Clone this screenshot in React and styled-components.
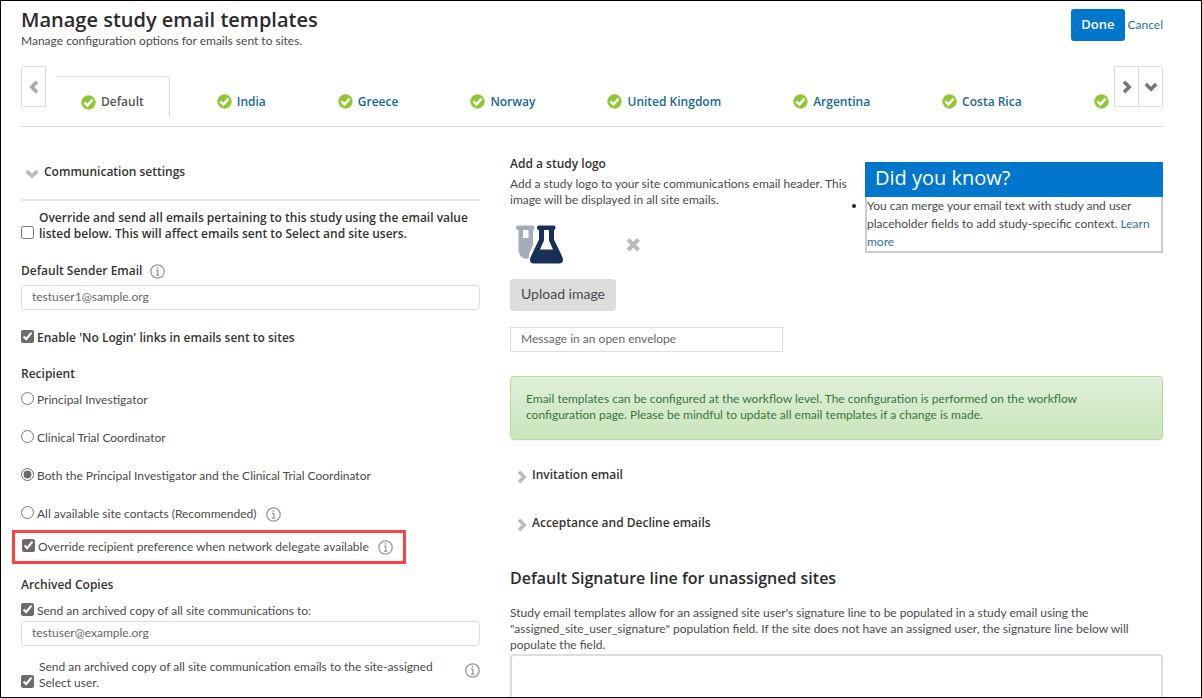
import React, { useState } from "react";
import styled, { createGlobalStyle, css } from "styled-components";

const GlobalStyle = createGlobalStyle`
  *, *::before, *::after { box-sizing: border-box; }
  body { margin: 0; background: #fff; }
  body, button, input, textarea {
    font-family: Lato, "Open Sans", sans-serif;
    font-size: 12px;
    line-height: 16px;
    color: #4a4a4a;
  }
  h1, h2, h3, p, ul { margin: 0; padding: 0; }
  button { cursor: pointer; }
`;

const strong = css`
  font-family: "Open Sans", Lato, sans-serif;
  font-weight: 600;
`;

const Frame = styled.div`
  height: 100vh;
  border: 1px solid #000;
  overflow-y: auto;
  scrollbar-width: none;
  padding: 0 38px 0 20px;
`;

const Header = styled.header`
  display: flex;
  justify-content: space-between;
  align-items: flex-start;
  padding-top: 8px;
`;

const Title = styled.h1`
  ${strong}
  font-size: 20px;
  line-height: 22px;
  color: #2b2b2b;
`;

const Actions = styled.div`
  display: flex;
  align-items: center;
  gap: 3px;
`;

const DoneButton = styled.button`
  ${strong}
  height: 32px;
  padding: 0 10px 3px;
  border: 0;
  border-radius: 3px;
  background: #0077cc;
  color: #fff;
  font-size: 13px;
`;

const Link = styled.a`
  color: #2a7596;
  text-decoration: none;
`;

const TabBar = styled.nav`
  display: flex;
  align-items: flex-start;
  height: 61px;
  margin-top: 17px;
  border-bottom: 1px solid #ddd;
`;

const Pager = styled.div`
  display: flex;
  flex: none;
  background: #fff;
`;

const PagerButton = styled.button`
  display: flex;
  align-items: center;
  justify-content: center;
  width: 25px;
  height: 41px;
  padding: 0;
  border: 1px solid #ddd;
  border-radius: ${(p) => (p.$corner === "left" ? "3px 0 0 0" : p.$corner === "right" ? "0 3px 0 0" : "0")};
  background: #fff;
  color: ${(p) => (p.$muted ? "#aaa" : "#777")};
  & + & { margin-left: -1px; }
`;

const TabList = styled.div`
  display: flex;
  flex: 1;
  min-width: 0;
  overflow: hidden;
  gap: 22px;
  padding: 10px 0 0 10px;
`;

const Tab = styled.button`
  ${strong}
  display: flex;
  flex: none;
  align-items: center;
  gap: 5px;
  height: 41px;
  padding: 10px 25px 0;
  border: 0 solid #ddd;
  border-width: ${(p) => (p.$active ? "1px 1px 0 0" : "0")};
  border-radius: 0 4px 0 0;
  background: none;
  color: ${(p) => (p.$active ? "#555" : "#146a90")};
`;

const Columns = styled.main`
  display: grid;
  grid-template-columns: 459fr 653fr;
  gap: 30px;
`;

const Column = styled.div`
  min-width: 0;
`;

const SectionToggle = styled.button`
  ${strong}
  display: flex;
  align-items: center;
  gap: 3px;
  width: 100%;
  padding: 0 0 0 5px;
  border: 0;
  background: none;
  color: #333;
  text-align: left;
  ${(p) =>
    p.$ruled &&
    css`
      gap: 5px;
      padding: 36px 0 18px 4px;
      border-bottom: 2px solid #e4e4e4;
    `}
  svg { color: #bbb; margin-top: 4px; }
`;

const ToggleStack = styled.div`
  display: grid;
  gap: 30px;
  margin-top: 26px;
`;

const SectionTitle = styled.h3`
  ${strong}
  margin-top: ${(p) => p.$space}px;
  font-size: 12px;
  line-height: 16px;
  color: #333;
`;

const FieldLabel = styled.div`
  ${strong}
  display: flex;
  align-items: center;
  gap: 8px;
  margin-top: 21px;
  color: #333;
`;

const TextInput = styled.input`
  display: block;
  width: 100%;
  height: 25px;
  margin-top: ${(p) => p.$space}px;
  padding: 0 10px 3px;
  border: 1px solid #ddd;
  border-radius: 4px;
  color: #666;
  background: #fff;
`;

const CaptionInput = styled(TextInput)`
  width: 273px;
  border-radius: 0;
`;

const Choice = styled.div`
  ${(p) => p.$strong && strong}
  display: flex;
  align-items: ${(p) => (p.$tall ? "flex-end" : "center")};
  gap: ${(p) => (p.$tall ? 5 : 3)}px;
  margin-top: ${(p) => p.$space}px;
  color: ${(p) => (p.$strong ? "#333" : "#4a4a4a")};
  input {
    flex: none;
    width: 13px;
    height: 13px;
    margin: 0 0 3px;
    accent-color: #6b6b6b;
  }
  label { flex: ${(p) => (p.$tall ? 1 : "none")}; }
`;

const Highlight = styled.div`
  width: fit-content;
  margin: 8px 0 0 -9px;
  padding: 6px 10px 6px 7px;
  border: 3px solid #fb4141;
`;

const InfoButton = styled.button`
  display: flex;
  flex: none;
  align-self: ${(p) => (p.$top ? "flex-start" : "center")};
  padding: ${(p) => (p.$top ? "4px 0 0" : "1px 0 0")};
  border: 0;
  margin: ${(p) => (p.$inset ? "0 0 0 6px" : "0")};
  background: none;
  color: #999;
`;

const LogoRow = styled.div`
  display: grid;
  grid-template-columns: 349fr 298fr;
  gap: 6px;
  align-items: start;
  padding-top: 29px;
`;

const Paragraph = styled.p`
  margin-top: ${(p) => p.$space || 0}px;
`;

const LogoPreview = styled.div`
  display: flex;
  align-items: center;
  gap: 61px;
  margin-top: 17px;
  padding-left: 6px;
`;

const IconButton = styled.button`
  display: flex;
  padding: 0;
  border: 0;
  background: none;
  color: #bbb;
`;

const UploadButton = styled.button`
  height: 32px;
  margin-top: 15px;
  padding: 0 11px 3px;
  border: 0;
  border-radius: 4px;
  background: #ddd;
  font-size: 14px;
`;

const TipCard = styled.aside`
  margin-top: 6px;
`;

const TipTitle = styled.h2`
  padding: 3px 10px 6px;
  background: #0077cc;
  color: #fff;
  font-family: "Open Sans", Lato, sans-serif;
  font-size: 20px;
  line-height: 26px;
  font-weight: 400;
`;

const TipList = styled.ul`
  border: 2px solid #ccc;
  border-top: 0;
  line-height: 18px;
  li::marker { color: #222; }
`;

const Notice = styled.div`
  margin-top: 24px;
  padding: 14px 60px 16px 15px;
  border: 1px solid #b2dba1;
  border-radius: 4px;
  background: linear-gradient(#dff0d8, #c8e5bc);
  color: #3c763d;
  box-shadow: 0 1px 2px rgba(0, 0, 0, 0.05);
`;

const Heading = styled.h2`
  ${strong}
  margin-top: 34px;
  font-size: 16px;
  line-height: 24px;
  color: #2b2b2b;
`;

const SignatureBox = styled.textarea`
  display: block;
  width: 100%;
  height: 100px;
  margin-top: 1px;
  padding: 6px 10px;
  border: 2px solid #ddd;
  border-radius: 4px;
  resize: none;
`;

const Chevron = ({ dir = "right" }) => {
  const turn = { right: 0, down: 90, left: 180 }[dir];
  return (
    <svg width="14" height="14" viewBox="0 0 14 14" aria-hidden="true">
      <path
        d="M4 1.8 L9.2 7 L4 12.2"
        transform={`rotate(${turn} 7 7)`}
        fill="none"
        stroke="currentColor"
        strokeWidth="3.6"
      />
    </svg>
  );
};

const CheckBadge = () => (
  <svg width="15" height="15" viewBox="0 0 15 15" aria-hidden="true">
    <circle cx="7.5" cy="7.5" r="7.2" fill="#8fc732" />
    <path d="M3.4 7.4 L6.4 10.4 L11.6 4.6" fill="none" stroke="#fff" strokeWidth="2.4" />
  </svg>
);

const Info = ({ about, inset, top }) => (
  <InfoButton type="button" aria-label={`About ${about}`} $inset={inset} $top={top}>
    <svg width="15" height="15" viewBox="0 0 15 15" aria-hidden="true">
      <circle cx="7.5" cy="7.5" r="6.7" fill="none" stroke="currentColor" strokeWidth="1.3" />
      <path d="M6 6.4 H7.8 V11 M5.8 11.2 H9.4" fill="none" stroke="currentColor" strokeWidth="1.3" />
      <rect x="6.7" y="3.2" width="1.6" height="1.6" fill="currentColor" />
    </svg>
  </InfoButton>
);

const StudyLogo = () => (
  <svg width="48" height="39" viewBox="0 0 48 39" role="img" aria-label="Study logo">
    <path
      fillRule="evenodd"
      fill="#a3adba"
      d="M1.5 0.5 H17 Q18.5 0.5 18.5 2.8 Q18.5 5 17 5 V20 L13.5 28 L12.5 33.5 Q8 34.5 5 31.5 Q2.5 29 2.5 25 V5 Q0 5 0 2.8 Q0 0.5 1.5 0.5 Z M7 5 V13 H12.5 V5 Z"
    />
    <path
      fillRule="evenodd"
      fill="#16305a"
      d="M22.5 0.5 H38 Q39.5 0.5 39.5 2.8 Q39.5 5 38 5 V14.5 L46.4 32 Q48.5 38.5 43 38.5 H18 Q12.5 38.5 14.6 32 L23 14.5 V5 Q21 5 21 2.8 Q21 0.5 22.5 0.5 Z M28 5 V15.5 L24 24.5 H37 L33 15.5 V5 Z"
    />
  </svg>
);

const CrossIcon = () => (
  <svg width="16" height="14" viewBox="0 0 16 14" aria-hidden="true">
    <path d="M3 1.5 L13.5 12 M13.5 1.5 L3 12" stroke="currentColor" strokeWidth="4" />
  </svg>
);

const tabs = ["Default", "India", "Greece", "Norway", "United Kingdom", "Argentina", "Costa Rica"];

const recipients = [
  { id: "pi", label: "Principal Investigator" },
  { id: "ctc", label: "Clinical Trial Coordinator" },
  { id: "both", label: "Both the Principal Investigator and the Clinical Trial Coordinator" },
  { id: "all", label: "All available site contacts (Recommended)", info: true },
];

export default function App() {
  const [tab, setTab] = useState("Default");
  const [recipient, setRecipient] = useState("both");

  return (
    <>
      <GlobalStyle />
      <Frame>
        <Header>
          <div>
            <Title>Manage study email templates</Title>
            <Paragraph $space={2}>Manage configuration options for emails sent to sites.</Paragraph>
          </div>
          <Actions>
            <DoneButton type="button">Done</DoneButton>
            <Link href="#cancel">Cancel</Link>
          </Actions>
        </Header>

        <TabBar aria-label="Countries">
          <PagerButton type="button" aria-label="Previous" $corner="left" $muted>
            <Chevron dir="left" />
          </PagerButton>
          <TabList>
            {tabs.map((name) => (
              <Tab key={name} type="button" $active={name === tab} onClick={() => setTab(name)}>
                <CheckBadge />
                {name}
              </Tab>
            ))}
            <Tab type="button" aria-label="Next country">
              <CheckBadge />
            </Tab>
          </TabList>
          <Pager>
            <PagerButton type="button" aria-label="Next">
              <Chevron />
            </PagerButton>
            <PagerButton type="button" aria-label="All countries" $corner="right">
              <Chevron dir="down" />
            </PagerButton>
          </Pager>
        </TabBar>

        <Columns>
          <Column>
            <SectionToggle type="button" $ruled aria-expanded="true">
              <Chevron dir="down" />
              Communication settings
            </SectionToggle>

            <Choice $tall $strong $space={9}>
              <input type="checkbox" id="override-sender" />
              <label htmlFor="override-sender">
                Override and send all emails pertaining to this study using the email value listed below. This
                will affect emails sent to Select and site users.
              </label>
            </Choice>

            <FieldLabel>
              <label htmlFor="sender">Default Sender Email</label>
              <Info about="default sender email" />
            </FieldLabel>
            <TextInput id="sender" type="email" defaultValue="testuser1@sample.org" $space={6} />

            <Choice $strong $space={20}>
              <input type="checkbox" id="no-login" defaultChecked />
              <label htmlFor="no-login">Enable 'No Login' links in emails sent to sites</label>
            </Choice>

            <SectionTitle $space={20}>Recipient</SectionTitle>
            {recipients.map((r, i) => (
              <Choice key={r.id} $space={i === 0 ? 10 : 22}>
                <input
                  type="radio"
                  name="recipient"
                  id={r.id}
                  checked={recipient === r.id}
                  onChange={() => setRecipient(r.id)}
                />
                <label htmlFor={r.id}>{r.label}</label>
                {r.info && <Info about="site contacts" inset />}
              </Choice>
            ))}

            <Highlight>
              <Choice $space={0}>
                <input type="checkbox" id="delegate" defaultChecked />
                <label htmlFor="delegate">Override recipient preference when network delegate available</label>
                <Info about="network delegates" inset />
              </Choice>
            </Highlight>

            <SectionTitle $space={13}>Archived Copies</SectionTitle>
            <Choice $space={10}>
              <input type="checkbox" id="archive" defaultChecked />
              <label htmlFor="archive">Send an archived copy of all site communications to:</label>
            </Choice>
            <TextInput
              type="email"
              aria-label="Archive email address"
              defaultValue="testuser@example.org"
              $space={2}
            />
            <Choice $tall $space={13}>
              <input type="checkbox" id="archive-user" defaultChecked />
              <label htmlFor="archive-user">
                Send an archived copy of all site communication emails to the site-assigned Select user.
              </label>
              <Info about="archived copies" inset top />
            </Choice>
          </Column>

          <Column>
            <LogoRow>
              <div>
                <SectionTitle $space={0}>Add a study logo</SectionTitle>
                <Paragraph $space={4}>
                  Add a study logo to your site communications email header. This image will be displayed in all
                  site emails.
                </Paragraph>
                <LogoPreview>
                  <StudyLogo />
                  <IconButton type="button" aria-label="Remove logo">
                    <CrossIcon />
                  </IconButton>
                </LogoPreview>
                <UploadButton type="button">Upload image</UploadButton>
                <CaptionInput
                  type="text"
                  aria-label="Image description"
                  defaultValue="Message in an open envelope"
                  $space={16}
                />
              </div>
              <TipCard>
                <TipTitle>Did you know?</TipTitle>
                <TipList>
                  <li>
                    You can merge your email text with study and user placeholder fields to add study-specific
                    context. <Link href="#learn-more">Learn more</Link>
                  </li>
                </TipList>
              </TipCard>
            </LogoRow>

            <Notice>
              Email templates can be configured at the workflow level. The configuration is performed on the
              workflow configuration page. Please be mindful to update all email templates if a change is made.
            </Notice>

            <ToggleStack>
              <SectionToggle type="button" aria-expanded="false">
                <Chevron />
                Invitation email
              </SectionToggle>
              <SectionToggle type="button" aria-expanded="false">
                <Chevron />
                Acceptance and Decline emails
              </SectionToggle>
            </ToggleStack>

            <Heading>Default Signature line for unassigned sites</Heading>
            <Paragraph $space={15}>
              Study email templates allow for an assigned site user's signature line to be populated in a study
              email using the "assigned_site_user_signature" population field. If the site does not have an
              assigned user, the signature line below will populate the field.
            </Paragraph>
            <SignatureBox aria-label="Default signature line" />
          </Column>
        </Columns>
      </Frame>
    </>
  );
}
